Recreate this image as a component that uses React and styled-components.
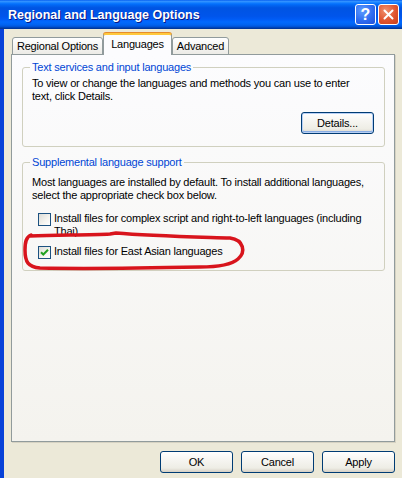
import React from 'react';
import styled, { createGlobalStyle } from 'styled-components';

const GlobalStyle = createGlobalStyle`
body {
    margin: 0;
    background: #ECE9D8;
}
`;

const Window = styled.div`
position: relative;
width: 402px;
height: 478px;
display: flex;
flex-direction: column;
overflow: hidden;
background: #ECE9D8;
font-family: "Liberation Sans", Arial, sans-serif;
font-size: 11px;
letter-spacing: -0.2px;
color: #000;
`;

const TitleBar = styled.div`
height: 29px;
flex-shrink: 0;
display: flex;
align-items: center;
justify-content: space-between;
padding: 0 3px 0 8px;
background: linear-gradient(to bottom, #0058EE 0%, #3593FF 4%, #288EFF 7%, #127DFF 10%, #036FFC 14%, #0262EE 20%, #0057E5 26%, #0054E3 30%, #0055EB 56%, #005BF5 66%, #026AFE 76%, #0062EF 86%, #0052D6 92%, #0040AB 96%, #003092 100%);
`;

const Title = styled.div`
color: #fff;
font-weight: bold;
font-size: 12.5px;
letter-spacing: 0;
text-shadow: 1px 1px 0 #0A1883;
`;

const TitleButtons = styled.div`
display: flex;
gap: 2px;
`;

const CaptionButton = styled.div`
width: 21px;
height: 21px;
box-sizing: border-box;
border: 1px solid #fff;
border-radius: 3px;
display: flex;
align-items: center;
justify-content: center;
color: #fff;
font-weight: bold;
font-size: 16px;
letter-spacing: 0;
background: ${props => props.close
        ? 'radial-gradient(circle at 35% 30%, #F0916F 0%, #E0542F 55%, #C8401B 100%)'
        : 'radial-gradient(circle at 35% 30%, #5E9CFF 0%, #2F6CF0 55%, #1E50D8 100%)'};
`;

const Body = styled.div`
flex: 1;
display: flex;
flex-direction: column;
border-left: 4px solid #0842D8;
padding: 0 7px 0 7px;
`;

const TabRow = styled.div`
height: 22px;
padding-top: 4px;
margin-bottom: -1px;
padding-left: 1px;
display: flex;
align-items: flex-end;
position: relative;
z-index: 1;
`;

const Tab = styled.div`
width: ${props => props.w}px;
box-sizing: border-box;
display: flex;
align-items: center;
justify-content: center;
border: 1px solid #919B9C;
border-radius: 3px 3px 0 0;
${props => props.selected ? `
height: 22px;
border-top: 2px solid #FFC83C;
border-bottom: none;
box-shadow: 0 -1px 0 #E68B2C;
background: #FCFCFE;
padding-bottom: 2px;
` : `
height: 18px;
border-top: 1px solid #919B9C;
background: linear-gradient(#FFFFFF, #ECEBE6);
`}
`;

const Panel = styled.div`
flex: 1;
border: 1px solid #919B9C;
box-shadow: 1px 1px 0 #D6D2C2;
background: linear-gradient(#FCFCFE, #F4F3EE);
padding: 0 9px 0 10px;
`;

const Group = styled.fieldset`
margin: ${props => props.top}px 0 0 0;
padding: 0 10px ${props => props.bottom}px 9px;
min-width: 0;
border: 1px solid #D0D0BF;
border-radius: 3px;
`;

const Legend = styled.legend`
color: #0046D5;
line-height: 13px;
padding: 0 2px;
margin-left: -2px;
`;

const Text = styled.p`
margin: ${props => props.top}px 0 0 0;
line-height: 13px;
white-space: nowrap;
`;

const ButtonRow = styled.div`
display: flex;
justify-content: flex-end;
gap: 8px;
margin-top: ${props => props.top || 0}px;
`;

const Button = styled.button`
width: 73px;
height: 22px;
padding: 0;
font-family: inherit;
font-size: 11px;
letter-spacing: -0.2px;
color: #000;
border: 1px solid #003C74;
border-radius: 3px;
background: linear-gradient(#FFFFFF 0%, #F6F5F1 40%, #EEEDE5 80%, #D6D0C5 100%);
box-shadow: ${props => props.focused ? 'inset 0 0 0 1px #B8D0F5, inset 0 -1px 0 1px #89ADE4' : 'none'};
`;

const CheckRow = styled.div`
display: flex;
align-items: flex-start;
gap: 3px;
margin-top: ${props => props.top}px;
margin-left: 6px;
line-height: 13px;
`;

const Box = styled.div`
width: 13px;
height: 13px;
margin-top: 1px;
box-sizing: border-box;
flex-shrink: 0;
border: 1px solid #1C5180;
background: linear-gradient(135deg, #DCDCD7 0%, #F5F4EF 60%, #FFFFFF 100%);
display: flex;
align-items: center;
justify-content: center;
`;

const Footer = styled.div`
padding: 9px 0 5px;
`;

const Annotation = styled.svg`
position: absolute;
left: 0;
top: 0;
pointer-events: none;
`;

function Checkbox({ checked }) {
    return (
        <Box>
            {checked && <svg width="9" height="9" viewBox="0 0 9 9">
                <path d="M1 4.2 L3.3 6.5 L8 1.8" fill="none" stroke="#21A121" strokeWidth="2" />
            </svg>}
        </Box>
    );
}

function App() {
    return (
        <Window>
            <GlobalStyle />
            <TitleBar>
                <Title>Regional and Language Options</Title>
                <TitleButtons>
                    <CaptionButton>?</CaptionButton>
                    <CaptionButton close>
                        <svg width="11" height="11" viewBox="0 0 11 11">
                            <path d="M1.5 1.5 L9.5 9.5 M9.5 1.5 L1.5 9.5" stroke="#fff" strokeWidth="2" strokeLinecap="round" />
                        </svg>
                    </CaptionButton>
                </TitleButtons>
            </TitleBar>
            <Body>
                <TabRow>
                    <Tab w={91}>Regional Options</Tab>
                    <Tab w={69} selected>Languages</Tab>
                    <Tab w={57}>Advanced</Tab>
                </TabRow>
                <Panel>
                    <Group top={6} bottom={12}>
                        <Legend>Text services and input languages</Legend>
                        <Text top={3}>To view or change the languages and methods you can use to enter<br />text, click Details.</Text>
                        <ButtonRow top={9}>
                            <Button focused>Details...</Button>
                        </ButtonRow>
                    </Group>
                    <Group top={9} bottom={11}>
                        <Legend>Supplemental language support</Legend>
                        <Text top={7}>Most languages are installed by default. To install additional languages,<br />select the appropriate check box below.</Text>
                        <CheckRow top={10}>
                            <Checkbox />
                            <span>Install files for complex script and right-to-left languages (including<br />Thai)</span>
                        </CheckRow>
                        <CheckRow top={7}>
                            <Checkbox checked />
                            <span>Install files for East Asian languages</span>
                        </CheckRow>
                    </Group>
                </Panel>
                <Footer>
                    <ButtonRow>
                        <Button>OK</Button>
                        <Button>Cancel</Button>
                        <Button>Apply</Button>
                    </ButtonRow>
                </Footer>
            </Body>
            <Annotation width="402" height="478" viewBox="0 0 402 478">
                <path d="M30 236 C60 235 90 235 110 234 L116 233 C150 236 200 237 230 238 C244 240 246 252 238 259 C230 266 215 267 200 267 C150 268 90 269 40 268 C28 267 25 262 25 250 C25 242 26 237 31 235"
                    fill="none" stroke="#D8141C" strokeWidth="3.5" strokeLinecap="round" strokeLinejoin="round" />
            </Annotation>
        </Window>
    );
}

export default App;
